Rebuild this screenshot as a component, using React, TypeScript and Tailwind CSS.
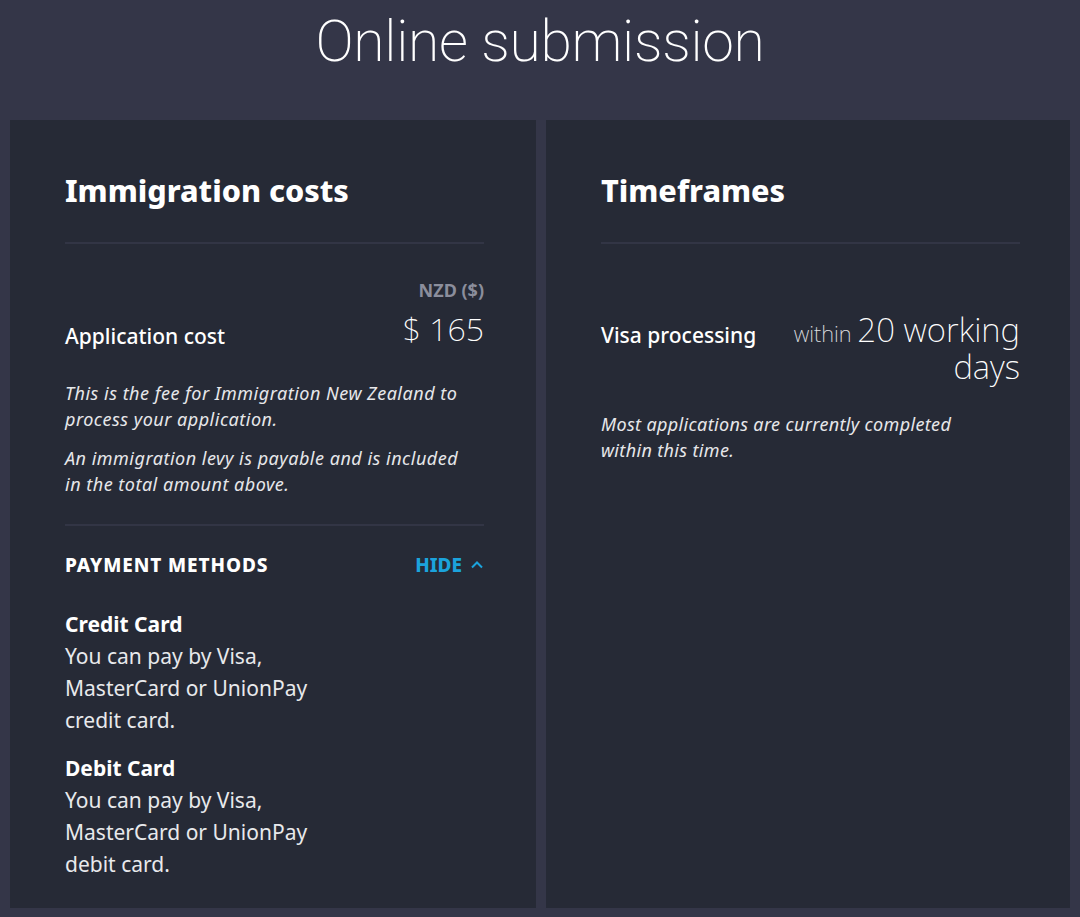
import React from "react";

export default function App() {
  return (
    <div className="min-h-[917px] w-[1080px] bg-[#343648] text-white" style={{ fontFamily: '"Noto Sans", "Open Sans", sans-serif' }}>
      <h1 className="h-[120px] pt-[8px] text-center text-[57px] font-extralight leading-[68px] tracking-[-0.3px] text-white" style={{ fontFamily: 'Roboto, "Noto Sans", sans-serif' }}>
        Online submission
      </h1>
      <div className="flex gap-[10px] px-[10px]">
        <section className="h-[788px] flex-1 bg-[#262a36] pl-[55px] pr-[52px] pt-[52px]">
          <h2 className="text-[30.5px] font-extrabold leading-[36px]">Immigration costs</h2>
          <div className="mt-[34px] h-[2px] bg-[#323545]" />
          <div className="mt-[34px] text-right text-[18px] font-bold leading-[24px] text-[#8b8e9c]">NZD ($)</div>
          <div className="mt-[4px] flex items-center justify-between">
            <span className="mt-[15px] text-[21px] font-medium">Application cost</span>
            <span className="text-[32px] font-extralight leading-[44px]">$ 165</span>
          </div>
          <p className="mt-[27px] max-w-[405px] text-[18px] italic leading-[26px] tracking-[0.5px] text-[#e6e7ea]">
            This is the fee for Immigration New Zealand to process your application.
          </p>
          <p className="mt-[13px] max-w-[405px] text-[18px] italic leading-[26px] tracking-[0.5px] text-[#e6e7ea]">
            An immigration levy is payable and is included in the total amount above.
          </p>
          <div className="mt-[27px] h-[2px] bg-[#323545]" />
          <div className="mt-[26px] flex items-center justify-between">
            <span className="text-[19px] font-extrabold leading-[26px] tracking-[0.9px]">PAYMENT METHODS</span>
            <span className="flex items-center gap-[8px] text-[19px] font-extrabold leading-[26px] text-[#1ba3dc]">
              HIDE
              <svg width="14" height="10" viewBox="0 0 14 10" fill="none">
                <path d="M2 7.5 L7 2.5 L12 7.5" stroke="#1ba3dc" strokeWidth="2" />
              </svg>
            </span>
          </div>
          <div className="mt-[30px] w-[260px] text-[21px] leading-[32px]">
            <div className="font-bold">Credit Card</div>
            <div className="text-[#e8e9ec]">You can pay by Visa, MasterCard or UnionPay credit card.</div>
            <div className="mt-[16px] font-bold">Debit Card</div>
            <div className="text-[#e8e9ec]">You can pay by Visa, MasterCard or UnionPay debit card.</div>
          </div>
        </section>
        <section className="h-[788px] flex-1 bg-[#262a36] pl-[55px] pr-[50px] pt-[52px]">
          <h2 className="text-[30.5px] font-extrabold leading-[36px]">Timeframes</h2>
          <div className="mt-[34px] h-[2px] bg-[#323545]" />
          <div className="mt-[71px] flex items-start justify-between">
            <span className="mt-[6px] text-[21px] font-medium leading-[28px]">Visa processing</span>
            <span className="-mt-[4px] ml-[26px] flex-1 text-right text-[33px] font-extralight leading-[37px]">
              <span className="text-[22px] leading-none text-[#e0e1e5]">within </span>20 working days
            </span>
          </div>
          <p className="mt-[26px] w-[370px] text-[18px] italic leading-[26px] tracking-[0.35px] text-[#e6e7ea]">
            Most applications are currently completed within this time.
          </p>
        </section>
      </div>
    </div>
  );
}
